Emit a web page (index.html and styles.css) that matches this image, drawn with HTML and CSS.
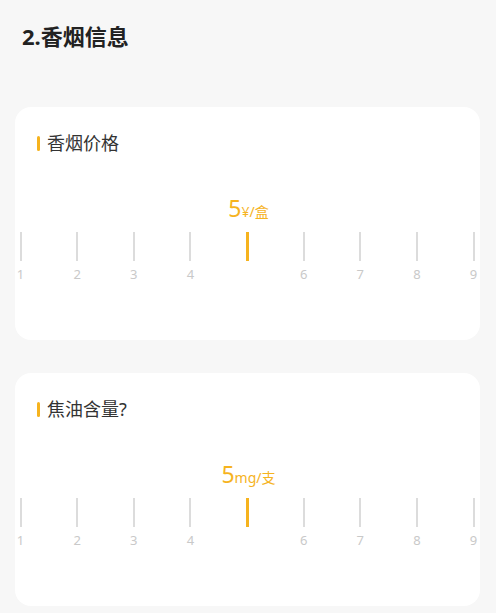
FILE: index.html
```html
<!DOCTYPE html>
<html lang="zh-CN">
<head>
  <meta charset="UTF-8" />
  <meta name="viewport" content="width=device-width, initial-scale=1" />
  <title>香烟信息</title>
  <link rel="stylesheet" href="styles.css">
</head>
<body>

  <h2 class="section-title">2.香烟信息</h2>

  <div class="card">
    <div class="card-label">香烟价格</div>
    <div class="ruler-value"><span class="num">5</span><span class="unit">¥/盒</span></div>
    <div class="ruler">
      <div class="mark"><i></i><span>1</span></div>
      <div class="mark"><i></i><span>2</span></div>
      <div class="mark"><i></i><span>3</span></div>
      <div class="mark"><i></i><span>4</span></div>
      <div class="mark active"><i></i><span>5</span></div>
      <div class="mark"><i></i><span>6</span></div>
      <div class="mark"><i></i><span>7</span></div>
      <div class="mark"><i></i><span>8</span></div>
      <div class="mark"><i></i><span>9</span></div>
    </div>
  </div>

  <div class="card">
    <div class="card-label">焦油含量?</div>
    <div class="ruler-value"><span class="num">5</span><span class="unit">mg/支</span></div>
    <div class="ruler">
      <div class="mark"><i></i><span>1</span></div>
      <div class="mark"><i></i><span>2</span></div>
      <div class="mark"><i></i><span>3</span></div>
      <div class="mark"><i></i><span>4</span></div>
      <div class="mark active"><i></i><span>5</span></div>
      <div class="mark"><i></i><span>6</span></div>
      <div class="mark"><i></i><span>7</span></div>
      <div class="mark"><i></i><span>8</span></div>
      <div class="mark"><i></i><span>9</span></div>
    </div>
  </div>

</body>
</html>
```

FILE: styles.css
```css
html, body {
  margin: 0;
  padding: 0;
  background: #f7f7f7;
  font-family: "Noto Sans", "Noto Sans CJK SC", sans-serif;
}

/* 1. Section title */
.section-title {
  margin: 0;
  padding: 21px 0 0 22px;
  font-size: 22px;
  line-height: 30px;
  font-weight: bold;
  color: #222;
}

/* 2. Card */
.card {
  margin: 56px 16px 33px 15px;
  height: 233px;
  box-sizing: border-box;
  padding-top: 24px;
  background: #fff;
  border-radius: 16px;
}
.card + .card { margin-top: 0; }

.card-label {
  display: flex;
  align-items: center;
  gap: 7px;
  margin-left: 22px;
  font-size: 18px;
  line-height: 24px;
  color: #333;
}
.card-label::before {
  content: "";
  width: 3px;
  height: 15px;
  border-radius: 2px;
  background: #f6b31e;
}

/* 3. Ruler */
.ruler-value {
  margin-top: 39px;
  text-align: center;
  padding-left: 2px;
  color: #f6b31e;
  line-height: 28px;
}
.ruler-value .num { font-size: 23px; }
.ruler-value .unit { font-size: 14px; }

.ruler {
  display: flex;
  justify-content: space-between;
  padding-right: 1px;
  margin-top: 6px;
}
.mark {
  width: 11px;
  display: flex;
  flex-direction: column;
  align-items: center;
}
.mark i {
  width: 2px;
  height: 29px;
  background: #dcdcdc;
}
.mark span {
  margin-top: 5px;
  font-size: 13px;
  line-height: 16px;
  color: #c9c9c9;
}
.mark.active i {
  width: 3px;
  background: #f6b31e;
}
.mark.active span { visibility: hidden; }
```
